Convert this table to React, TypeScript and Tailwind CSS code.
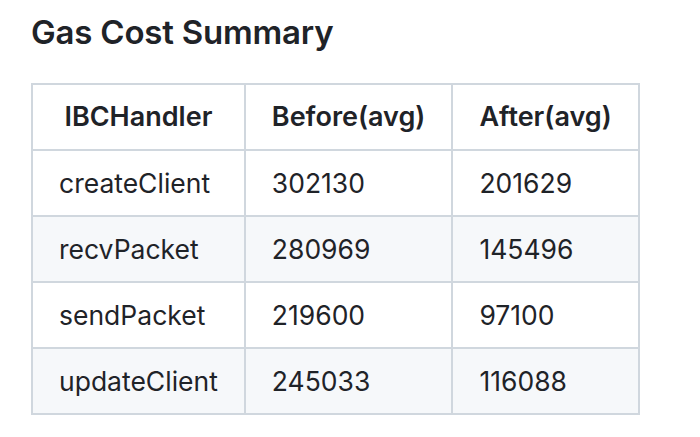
const rows = [
  { name: "createClient", before: "302130", after: "201629" },
  { name: "recvPacket", before: "280969", after: "145496" },
  { name: "sendPacket", before: "219600", after: "97100" },
  { name: "updateClient", before: "245033", after: "116088" },
];

export default function App() {
  return (
    <div
      className="w-[700px] h-[437px] bg-white text-[#1f2328] px-[31px] pt-[10px]"
      style={{ fontFamily: "Inter, 'Noto Sans', sans-serif" }}
    >
      <h2 className="text-[33px] font-semibold leading-[44px] tracking-[-0.2px]">Gas Cost Summary</h2>
      <table className="mt-[29px] border-collapse leading-[40px]">
        <thead>
          <tr>
            {["IBCHandler", "Before(avg)", "After(avg)"].map((h) => (
              <th
                key={h}
                className="border-2 border-[#d0d7de] px-[26px] py-[12px] text-[27px] font-semibold text-center"
              >
                {h}
              </th>
            ))}
          </tr>
        </thead>
        <tbody className="text-[26.5px]">
          {rows.map((r, i) => (
            <tr key={r.name} className={i % 2 === 1 ? "bg-[#f6f8fa]" : "bg-white"}>
              <td className="border-2 border-[#d0d7de] px-[26px] py-[12px]">{r.name}</td>
              <td className="border-2 border-[#d0d7de] px-[26px] py-[12px]">{r.before}</td>
              <td className="border-2 border-[#d0d7de] px-[26px] py-[12px]">{r.after}</td>
            </tr>
          ))}
        </tbody>
      </table>
    </div>
  );
}
